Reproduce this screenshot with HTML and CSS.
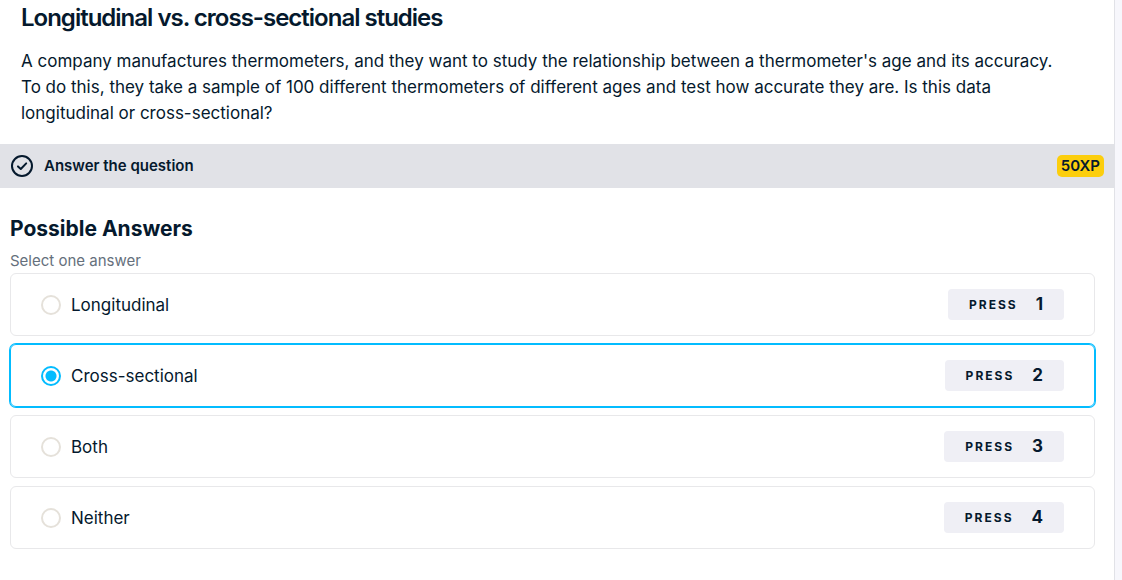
FILE: index.html
```html
<!DOCTYPE html>
<html lang="en">
<head>
<meta charset="utf-8">
<meta name="viewport" content="width=device-width, initial-scale=1">
<title>Longitudinal vs. cross-sectional studies</title>
<link rel="stylesheet" href="styles.css">
</head>
<body>
<main class="exercise">
  <section class="intro">
    <h1 class="title">Longitudinal vs. cross-sectional studies</h1>
    <p class="description">A company manufactures thermometers, and they want to study the relationship between a thermometer's age and its accuracy. To do this, they take a sample of 100 different thermometers of different ages and test how accurate they are. Is this data longitudinal or cross-sectional?</p>
  </section>
  <header class="bar">
    <svg class="bar-icon" viewBox="0 0 24 24" aria-hidden="true"><circle cx="12" cy="12" r="10"/><path d="M8 12.4l2.8 2.6 5.4-5.6"/></svg>
    <h2 class="bar-title">Answer the question</h2>
    <span class="xp">50XP</span>
  </header>
  <form class="answers">
    <h3 class="answers-title">Possible Answers</h3>
    <p class="hint">Select one answer</p>
    <div class="options">
      <label class="option"><input class="radio" type="radio" name="answer"><span class="option-text">Longitudinal</span><span class="key"><span class="press">PRESS</span><span class="num">1</span></span></label>
      <label class="option"><input class="radio" type="radio" name="answer" checked><span class="option-text">Cross-sectional</span><span class="key"><span class="press">PRESS</span><span class="num">2</span></span></label>
      <label class="option"><input class="radio" type="radio" name="answer"><span class="option-text">Both</span><span class="key"><span class="press">PRESS</span><span class="num">3</span></span></label>
      <label class="option"><input class="radio" type="radio" name="answer"><span class="option-text">Neither</span><span class="key"><span class="press">PRESS</span><span class="num">4</span></span></label>
    </div>
  </form>
</main>
</body>
</html>
```
FILE: styles.css
```css
* { box-sizing: border-box; margin: 0; }
body {
  background: #f7f7fc;
  color: #05192d;
  font-family: Inter, "Liberation Sans", sans-serif;
  padding-right: 7px;
}
.exercise {
  min-height: 100vh;
  background: #fff;
  border-right: 1px solid #e1e2e7;
}
.intro { padding: 4px 57px 18px 21px; }
.title { font-size: 24px; line-height: 28px; font-weight: 600; letter-spacing: -1px; }
.description { margin-top: 16px; font-size: 17px; line-height: 26px; }
.bar {
  display: flex;
  align-items: center;
  gap: 10px;
  height: 44px;
  padding: 0 10px;
  background: #e1e2e7;
}
.bar-icon {
  width: 24px;
  height: 24px;
  fill: none;
  stroke: #05192d;
  stroke-width: 2;
  stroke-linecap: round;
  stroke-linejoin: round;
}
.bar-title { flex: 1; font-size: 15px; line-height: 20px; font-weight: 600; }
.xp {
  padding: 0 4px;
  border-radius: 5px;
  background: #fcce0d;
  font-size: 15px;
  line-height: 22px;
  font-weight: 600;
}
.answers { padding: 27px 19px 0 10px; }
.answers-title { font-size: 21px; line-height: 28px; font-weight: 700; }
.hint { padding: 8px 0 2px; font-size: 15px; line-height: 20px; color: #65707c; }
.options { display: grid; gap: 8px; }
.option {
  display: flex;
  align-items: center;
  padding: 15px 30px;
  border: 1px solid #e8e8ea;
  border-radius: 6px;
  cursor: pointer;
}
.option:has(.radio:checked) { border-color: #03bcff; box-shadow: 0 0 0 1px #03bcff; }
.radio {
  appearance: none;
  width: 20px;
  height: 20px;
  margin: 0 10px 0 0;
  border: 2px solid #e5e1da;
  border-radius: 50%;
  background: #fff;
}
.radio:checked {
  border-color: #03bcff;
  background: radial-gradient(circle, #03bcff 5px, #fff 6px);
}
.option-text { flex: 1; font-size: 17px; line-height: 26px; }
.key {
  display: flex;
  align-items: center;
  gap: 18px;
  padding: 0 21px;
  border-radius: 4px;
  background: #efeff5;
  line-height: 31px;
  font-weight: 700;
}
.press { font-size: 12px; letter-spacing: 2px; }
.num { font-size: 17px; }
```
